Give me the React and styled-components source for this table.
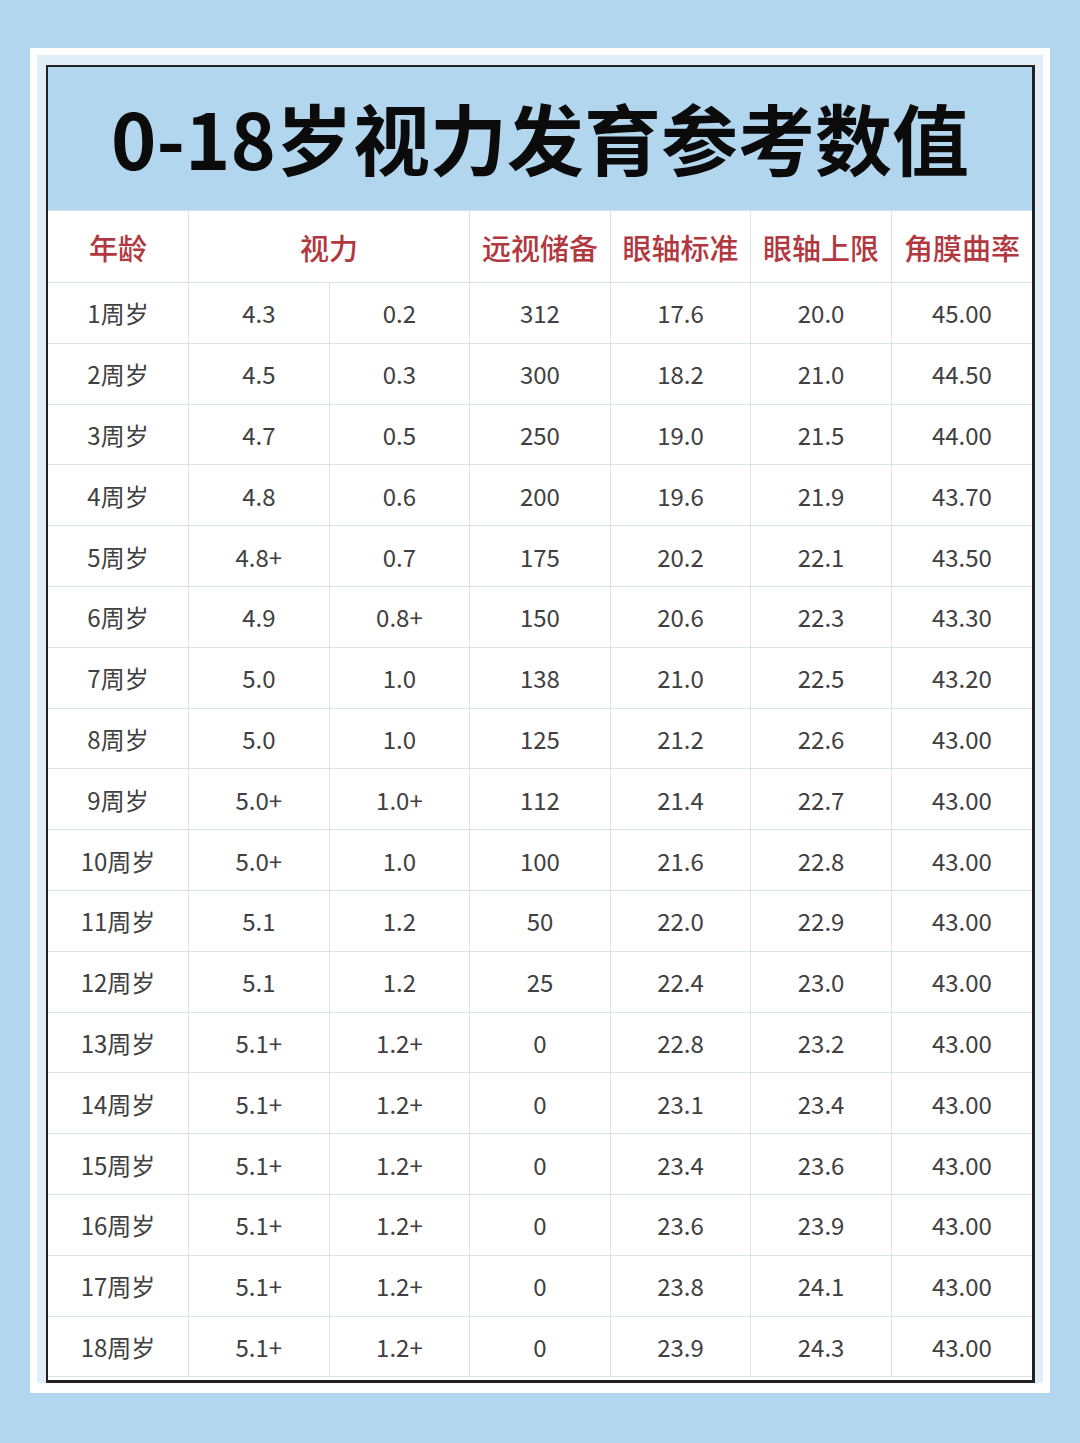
import styled, { createGlobalStyle } from "styled-components";

const GlobalStyle = createGlobalStyle`
  html, body {
    margin: 0;
    padding: 0;
    background: #b3d6ef;
  }
  body {
    font-family: "Noto Sans CJK SC", "Noto Sans", sans-serif;
  }
`;

const Page = styled.div`
  width: 1080px;
  height: 1443px;
  background: #b3d6ef;
  padding: 48px 30px 0;
  box-sizing: border-box;
`;

const Frame = styled.div`
  background: #ffffff;
  padding: 7px;
`;

const Inner = styled.div`
  background: #e1eef8;
  padding: 10px 8px 0 9px;
`;

const Card = styled.div`
  border: 2px solid #222;
  border-right-width: 3px;
  border-bottom-width: 3px;
  background: #fff;
`;

const TitleBand = styled.div`
  height: 144px;
  background: #b3d6ef;
  display: flex;
  align-items: center;
  justify-content: center;
  border-bottom: 1px solid #d6e3ec;
  box-sizing: border-box;
`;

const Title = styled.h1`
  margin: 0;
  font-size: 77px;
  font-weight: 700;
  color: #0b0b0b;
  line-height: 1;
  padding-bottom: 4px;
`;

const Table = styled.table`
  width: 100%;
  border-collapse: collapse;
  table-layout: fixed;
`;

const HeadCell = styled.th`
  height: 71px;
  padding: 0;
  font-size: 29px;
  font-weight: 500;
  color: #b2383f;
  text-align: center;
  white-space: nowrap;
  border-right: 1px solid #d9e3ea;
  border-bottom: 1px solid #d9e3ea;
  &:last-child {
    border-right: none;
  }
`;

const Row = styled.tr`
  height: 60.8px;
`;

const Cell = styled.td`
  padding: 0;
  font-size: 24px;
  font-weight: 400;
  color: #404040;
  text-align: center;
  border-right: 1px solid #d9e3ea;
  border-bottom: 1px solid #d9e3ea;
  &:last-child {
    border-right: none;
  }
`;

const Spacer = styled.div`
  height: 3px;
`;

const rows = [
  ["1周岁", "4.3", "0.2", "312", "17.6", "20.0", "45.00"],
  ["2周岁", "4.5", "0.3", "300", "18.2", "21.0", "44.50"],
  ["3周岁", "4.7", "0.5", "250", "19.0", "21.5", "44.00"],
  ["4周岁", "4.8", "0.6", "200", "19.6", "21.9", "43.70"],
  ["5周岁", "4.8+", "0.7", "175", "20.2", "22.1", "43.50"],
  ["6周岁", "4.9", "0.8+", "150", "20.6", "22.3", "43.30"],
  ["7周岁", "5.0", "1.0", "138", "21.0", "22.5", "43.20"],
  ["8周岁", "5.0", "1.0", "125", "21.2", "22.6", "43.00"],
  ["9周岁", "5.0+", "1.0+", "112", "21.4", "22.7", "43.00"],
  ["10周岁", "5.0+", "1.0", "100", "21.6", "22.8", "43.00"],
  ["11周岁", "5.1", "1.2", "50", "22.0", "22.9", "43.00"],
  ["12周岁", "5.1", "1.2", "25", "22.4", "23.0", "43.00"],
  ["13周岁", "5.1+", "1.2+", "0", "22.8", "23.2", "43.00"],
  ["14周岁", "5.1+", "1.2+", "0", "23.1", "23.4", "43.00"],
  ["15周岁", "5.1+", "1.2+", "0", "23.4", "23.6", "43.00"],
  ["16周岁", "5.1+", "1.2+", "0", "23.6", "23.9", "43.00"],
  ["17周岁", "5.1+", "1.2+", "0", "23.8", "24.1", "43.00"],
  ["18周岁", "5.1+", "1.2+", "0", "23.9", "24.3", "43.00"],
];

export default function App() {
  return (
    <>
      <GlobalStyle />
      <Page>
        <Frame>
          <Inner>
            <Card>
              <TitleBand>
                <Title>0-18岁视力发育参考数值</Title>
              </TitleBand>
              <Table>
                <thead>
                  <tr>
                    <HeadCell>年龄</HeadCell>
                    <HeadCell colSpan={2}>视力</HeadCell>
                    <HeadCell>远视储备</HeadCell>
                    <HeadCell>眼轴标准</HeadCell>
                    <HeadCell>眼轴上限</HeadCell>
                    <HeadCell>角膜曲率</HeadCell>
                  </tr>
                </thead>
                <tbody>
                  {rows.map((r) => (
                    <Row key={r[0]}>
                      {r.map((v, i) => (
                        <Cell key={i}>{v}</Cell>
                      ))}
                    </Row>
                  ))}
                </tbody>
              </Table>
              <Spacer />
            </Card>
          </Inner>
          <Spacer />
        </Frame>
      </Page>
    </>
  );
}
